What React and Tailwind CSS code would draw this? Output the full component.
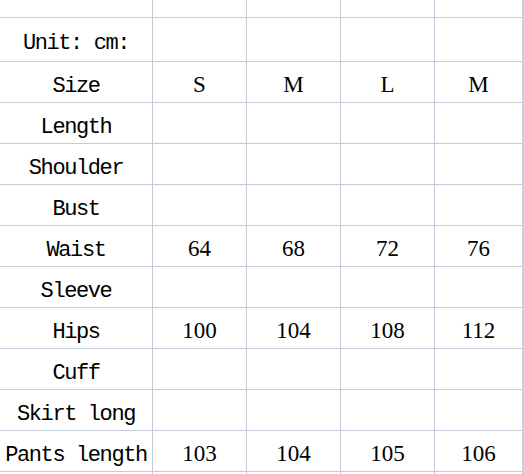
const rows = [
  { label: '', values: ['', '', '', ''], h: 'h-[18px]' },
  { label: 'Unit: cm:', values: ['', '', '', ''], h: 'h-[44px]' },
  { label: 'Size', values: ['S', 'M', 'L', 'M'] },
  { label: 'Length', values: ['', '', '', ''] },
  { label: 'Shoulder', values: ['', '', '', ''] },
  { label: 'Bust', values: ['', '', '', ''] },
  { label: 'Waist', values: ['64', '68', '72', '76'] },
  { label: 'Sleeve', values: ['', '', '', ''] },
  { label: 'Hips', values: ['100', '104', '108', '112'] },
  { label: 'Cuff', values: ['', '', '', ''] },
  { label: 'Skirt long', values: ['', '', '', ''] },
  { label: 'Pants length', values: ['103', '104', '105', '106'] },
  { label: '', values: ['', '', '', ''], h: 'h-[41px]' },
]

export default function App() {
  return (
    <div className="w-[523px] h-[474px] overflow-hidden bg-white text-black">
      <div className="grid grid-cols-[153px_94px_94px_94px_1fr]">
        {rows.map((r, i) => (
          <div key={i} className="contents">
            <div
              className={`${r.h || 'h-[41px]'} flex items-center justify-center pt-[8px] border-r border-b border-[#c6cbdc] whitespace-nowrap text-[22px] tracking-[-1.4px] font-['Liberation_Mono',monospace]`}
            >
              {r.label}
            </div>
            {r.values.map((v, j) => (
              <div
                key={j}
                className={`${r.h || 'h-[41px]'} flex items-center justify-center pt-[6px] border-r border-b border-[#c6cbdc] text-[23px] font-['Liberation_Serif',serif]`}
              >
                {v}
              </div>
            ))}
          </div>
        ))}
      </div>
    </div>
  )
}
